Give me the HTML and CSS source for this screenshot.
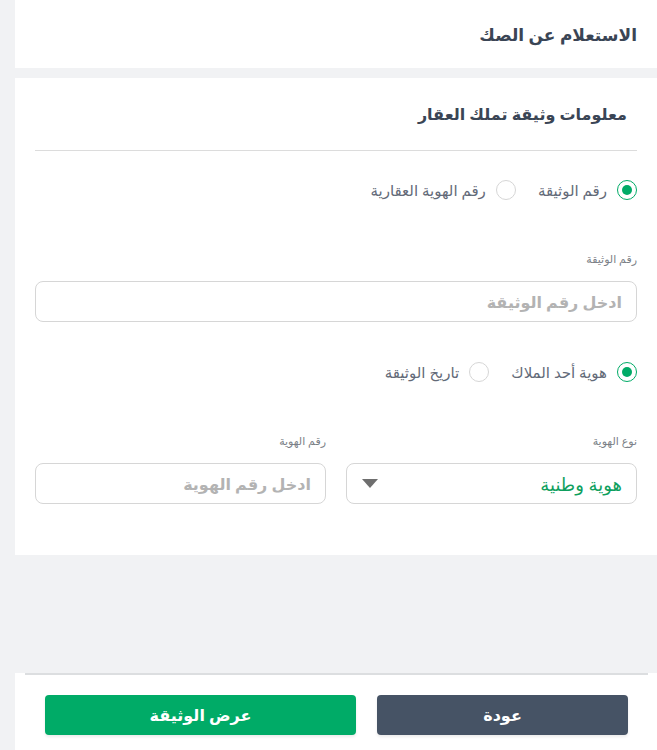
FILE: index.html
```html
<!DOCTYPE html>
<html lang="ar" dir="rtl">
<head>
  <meta charset="UTF-8">
  <meta name="viewport" content="width=device-width, initial-scale=1.0">
  <title>الاستعلام عن الصك</title>
  <link rel="stylesheet" href="styles.css">
</head>
<body>
  <div class="page">
    <div class="top-bar">
      <h1>الاستعلام عن الصك</h1>
    </div>

    <div class="card">
      <h2 class="card-title">معلومات وثيقة تملك العقار</h2>
      <div class="divider"></div>

      <div class="radios first-radios">
        <label class="radio checked"><span class="dot"></span>رقم الوثيقة</label>
        <label class="radio"><span class="dot"></span>رقم الهوية العقارية</label>
      </div>

      <div class="field doc-field">
        <div class="field-label">رقم الوثيقة</div>
        <div class="input placeholder">ادخل رقم الوثيقة</div>
      </div>

      <div class="radios second-radios">
        <label class="radio checked"><span class="dot"></span>هوية أحد الملاك</label>
        <label class="radio"><span class="dot"></span>تاريخ الوثيقة</label>
      </div>

      <div class="row">
        <div class="field">
          <div class="field-label">نوع الهوية</div>
          <div class="input select">
            <span class="value">هوية وطنية</span>
            <span class="arrow"></span>
          </div>
        </div>
        <div class="field">
          <div class="field-label">رقم الهوية</div>
          <div class="input placeholder">ادخل رقم الهوية</div>
        </div>
      </div>
    </div>

    <div class="footer">
      <div class="footer-line"></div>
      <div class="buttons">
        <a href="javascript:;" class="btn btn-dark">عودة</a>
        <a href="javascript:;" class="btn btn-green">عرض الوثيقة</a>
      </div>
    </div>
  </div>
</body>
</html>
```

FILE: styles.css
```css
*{margin:0;padding:0;box-sizing:border-box;}
html,body{height:100%;}
body{background:#f1f2f4;font-family:"Noto Sans","DejaVu Sans",sans-serif;color:#3b4656;}
a{text-decoration:none;}
.page{margin-left:15px;min-height:100%;display:flex;flex-direction:column;}

/* top bar */
.top-bar{background:#fff;height:68px;display:flex;align-items:center;padding:0 20px;}
.top-bar h1{font-size:17px;font-weight:bold;color:#3a4555;}

/* card */
.card{background:#fff;margin-top:10px;padding:0 20px 51px;}
.card-title{font-size:16px;font-weight:bold;line-height:24px;margin-top:24px;padding-right:10px;color:#3a4555;}
.divider{height:1px;background:#dcdcdc;margin-top:24px;}

.radios{display:flex;gap:22px;height:20px;align-items:center;}
.first-radios{margin-top:29px;}
.second-radios{margin-top:40px;}
.radio{display:flex;align-items:center;gap:10px;font-size:15px;color:#636a78;}
.radio .dot{width:20px;height:20px;border-radius:50%;border:1.5px solid #d6d6d6;position:relative;}
.radio.checked .dot{border-color:#00ab67;}
.radio.checked .dot::after{content:"";position:absolute;left:3.5px;top:3.5px;width:10px;height:10px;border-radius:50%;background:#00ab67;}

.field-label{font-size:11px;line-height:16px;color:#7b7f87;margin-bottom:14px;}
.doc-field{margin-top:51px;}
.input{height:41px;border:1px solid #d6d6d6;border-radius:8px;display:flex;align-items:center;padding:0 14px;font-size:16px;}
.placeholder{color:#b3b3b3;font-weight:bold;}
.select{justify-content:space-between;}
.select .value{color:#0f9f5e;font-size:18px;}
.arrow{width:0;height:0;border-left:8px solid transparent;border-right:8px solid transparent;border-top:9px solid #6e6e6e;margin-left:1px;}

.row{display:grid;grid-template-columns:1fr 1fr;gap:20px;margin-top:51px;}

/* footer */
.footer{margin-top:auto;background:#fff;height:77px;}
.footer-line{height:2px;background:#dcdee0;margin:0 9px 0 10px;}
.buttons{display:grid;grid-template-columns:251px 1fr;gap:21px;padding:20px 29px 0 30px;}
.btn{height:40px;border-radius:4px;display:flex;align-items:center;justify-content:center;color:#fff;font-size:16px;font-weight:bold;box-shadow:0 2px 3px rgba(0,0,0,.08);}
.btn-dark{background:#465365;}
.btn-green{background:#00ab67;}
```
